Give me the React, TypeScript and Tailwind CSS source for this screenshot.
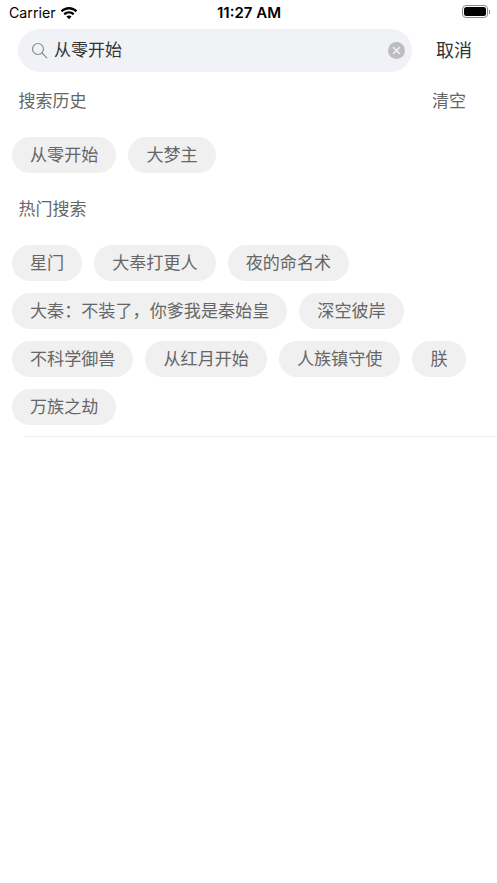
const history = ["从零开始", "大梦主"];
const hot = ["星门", "大奉打更人", "夜的命名术", "大秦：不装了，你爹我是秦始皇", "深空彼岸", "不科学御兽", "从红月开始", "人族镇守使", "朕", "万族之劫"];

function Chip({ label }: { label: string }) {
  return (
    <div className="flex h-9 items-center rounded-full bg-[#f0f0f0] px-[18px] pt-[1px] text-[17.1px] text-[#666666]">
      {label}
    </div>
  );
}

function StatusBar() {
  return (
    <div className="relative flex h-[26px] items-center pl-[9px] pr-[7px] font-['Inter','Liberation_Sans',sans-serif] text-black">
      <span className="text-[14.2px] leading-none">Carrier</span>
      <svg className="ml-[4px] h-[13px] w-[18px]" viewBox="0 0 20 15" fill="#000">
        <path d="M10 3c3 0 5.700 1.100 7.700 3l1.800-1.900C17 1.500 13.700 0 10 0S3 1.500.5 4.100L2.300 6c2-1.900 4.700-3 7.700-3z" />
        <path d="M10 7.600c1.700 0 3.300.7 4.500 1.800l1.800-1.900C14.600 5.900 12.400 4.900 10 4.900S5.400 5.900 3.700 7.500l1.800 1.900C6.700 8.300 8.300 7.600 10 7.600z" />
        <path d="M10 9.800c-1.200 0-2.200.5-3 1.200l3 3.200 3-3.200c-.8-.7-1.800-1.200-3-1.200z" />
      </svg>
      <span className="absolute left-[217px] top-[5px] text-[15px] font-semibold leading-none">11:27 AM</span>
      <div className="ml-auto mb-[3px] flex items-center">
        <div className="flex h-[13px] w-[26px] items-center rounded-[4px] border border-[#8a8a8a] p-[1px]">
          <div className="h-full w-full rounded-[2.5px] bg-black" />
        </div>
        <div className="ml-[1px] h-[4px] w-[1px] bg-[#8a8a8a]" />
      </div>
    </div>
  );
}

export default function App() {
  return (
    <div className="min-h-screen bg-white font-['Liberation_Sans','Noto_Sans_CJK_SC',sans-serif]">
      <StatusBar />
      <div className="mt-[3px] flex items-center pl-[18px]">
        <div className="flex h-[43px] w-[394px] items-center rounded-full bg-[#f1f2f6] pl-[13px] pr-[7px]">
          <svg className="h-[17px] w-[17px]" viewBox="0 0 17 17" fill="none" stroke="#8c8c8c" strokeWidth="1.2" strokeLinecap="round">
            <circle cx="7" cy="7" r="5.500" />
            <path d="M11 11l4.800 4.800" />
          </svg>
          <span className="ml-[6px] pt-[1px] text-[17px] text-[#333333]">从零开始</span>
          <div className="ml-auto flex h-[17px] w-[17px] items-center justify-center rounded-full bg-[#bdbdbd]">
            <svg className="h-[9px] w-[9px]" viewBox="0 0 9 9" stroke="#f1f2f6" strokeWidth="1.500" strokeLinecap="round">
              <path d="M1.500 1.500l6 6M7.500 1.500l-6 6" />
            </svg>
          </div>
        </div>
        <span className="ml-[24px] pt-[2px] text-[18px] text-[#333333]">取消</span>
      </div>
      <div className="mt-[18px] flex h-[24px] items-center justify-between pl-[18.5px] pr-[31px] text-[17px] text-[#666666]">
        <span>搜索历史</span>
        <span>清空</span>
      </div>
      <div className="mt-[23px] flex flex-wrap gap-3 pl-3">
        {history.map((t) => (
          <Chip key={t} label={t} />
        ))}
      </div>
      <div className="mt-[25px] flex h-[24px] items-center pl-[18.5px] text-[17px] text-[#666666]">热门搜索</div>
      <div className="mt-[23px] flex flex-wrap gap-3 pl-3 pr-3">
        {hot.map((t) => (
          <Chip key={t} label={t} />
        ))}
      </div>
      <div className="ml-[24px] mt-[11px] h-px bg-[#f0f0f0]" />
    </div>
  );
}
